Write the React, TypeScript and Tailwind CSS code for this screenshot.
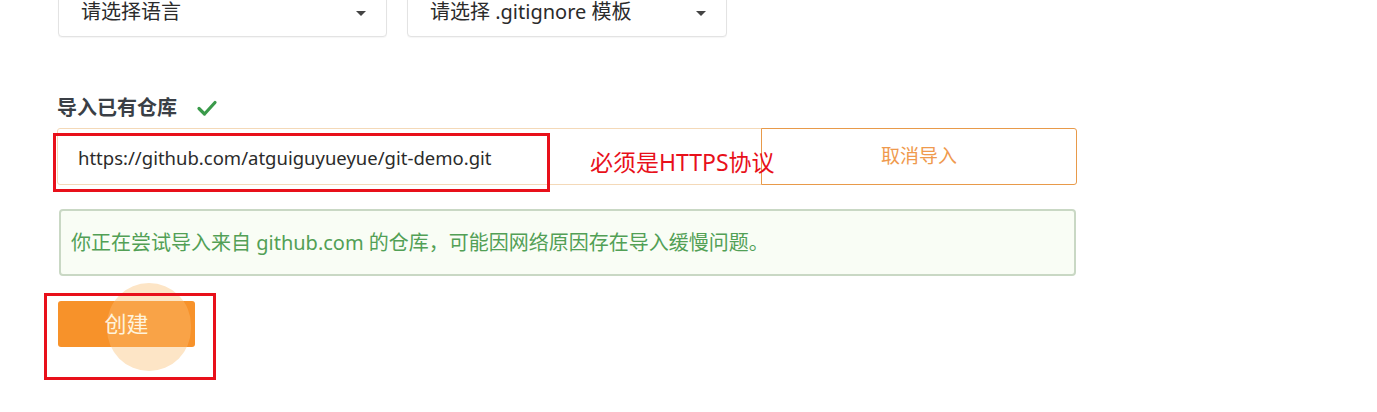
import React from 'react'

const font = { fontFamily: '"Noto Sans", "Noto Sans CJK SC", sans-serif' }

function SelectBox({ label, width }: { label: string; width: string }) {
  return (
    <div className={`${width} h-[48px] flex items-center justify-between pl-[22px] pr-[20px] border border-[#e3e3e3] rounded-[4px] bg-white shadow-[0_1px_1px_rgba(0,0,0,0.04)]`}>
      <span className="text-[20px] leading-[20px] text-[#2b2b2b] mt-[-2px]">{label}</span>
      <span className="w-0 h-0 border-l-[5px] border-r-[5px] border-t-[5px] border-l-transparent border-r-transparent border-t-[#444]" />
    </div>
  )
}

export default function App() {
  return (
    <div className="relative w-[1377px] h-[412px] bg-white overflow-hidden" style={font}>
      <div className="pl-[58px] -mt-[11px] flex gap-[20px]">
        <SelectBox label="请选择语言" width="w-[329px]" />
        <SelectBox label="请选择 .gitignore 模板" width="w-[320px]" />
      </div>

      <div className="pl-[57px] mt-[56px] h-[30px] flex items-center gap-[19px]">
        <span className="text-[20px] font-bold text-[#3a3f46]">导入已有仓库</span>
        <svg width="22" height="18" viewBox="0 0 22 18">
          <path d="M3 9.5 L8.5 15 L19 3.5" fill="none" stroke="#3a9a4a" strokeWidth="3.2" strokeLinecap="round" strokeLinejoin="round" />
        </svg>
      </div>

      <div className="pl-[57px] mt-[5px] flex w-[1077px]">
        <div className="w-[705px] h-[57px] border border-[#f4d9b8] rounded-l-[3px] flex items-center pl-[20px]">
          <span className="text-[18.5px] text-[#2b2b2b] mt-[2px]">https://github.com/atguiguyueyue/git-demo.git</span>
        </div>
        <div className="flex-1 h-[57px] border border-[#e89a4a] rounded-r-[3px] -ml-[1px] flex items-center justify-center">
          <span className="text-[19px] text-[#ef9a4e]">取消导入</span>
        </div>
      </div>

      <div className="ml-[59px] mt-[24px] w-[1017px] h-[67px] border-2 border-[#c9d8c4] rounded-[4px] bg-[#f9fdf5] flex items-center pl-[10px]">
        <span className="text-[20px] text-[#52a055]">你正在尝试导入来自 github.com 的仓库，可能因网络原因存在导入缓慢问题。</span>
      </div>

      <div className="relative ml-[58px] mt-[25px] w-[137px] h-[46px]">
        <div className="absolute left-[49px] top-[-18px] w-[84px] h-[88px] rounded-full bg-[#fde5c6]" />
        <div className="absolute inset-0 rounded-[3px] bg-[#f7922a] overflow-hidden">
          <div className="absolute left-[49px] top-[-18px] w-[84px] h-[88px] rounded-full bg-[#ffd9a0] opacity-25" />
        </div>
        <div className="relative h-full flex items-center justify-center">
          <span className="text-[22px] text-[#fff3dc] mt-[-2px]">创建</span>
        </div>
      </div>

      {/* annotations */}
      <div className="absolute left-[53px] top-[133px] w-[497px] h-[59px] border-[3px] border-[#e8101a]" />
      <span className="absolute left-[590px] top-[147px] text-[23px] text-[#e8101a] leading-[30px]">必须是HTTPS协议</span>
      <div className="absolute left-[44px] top-[293px] w-[172px] h-[87px] border-[3px] border-[#e8101a]" />
    </div>
  )
}
